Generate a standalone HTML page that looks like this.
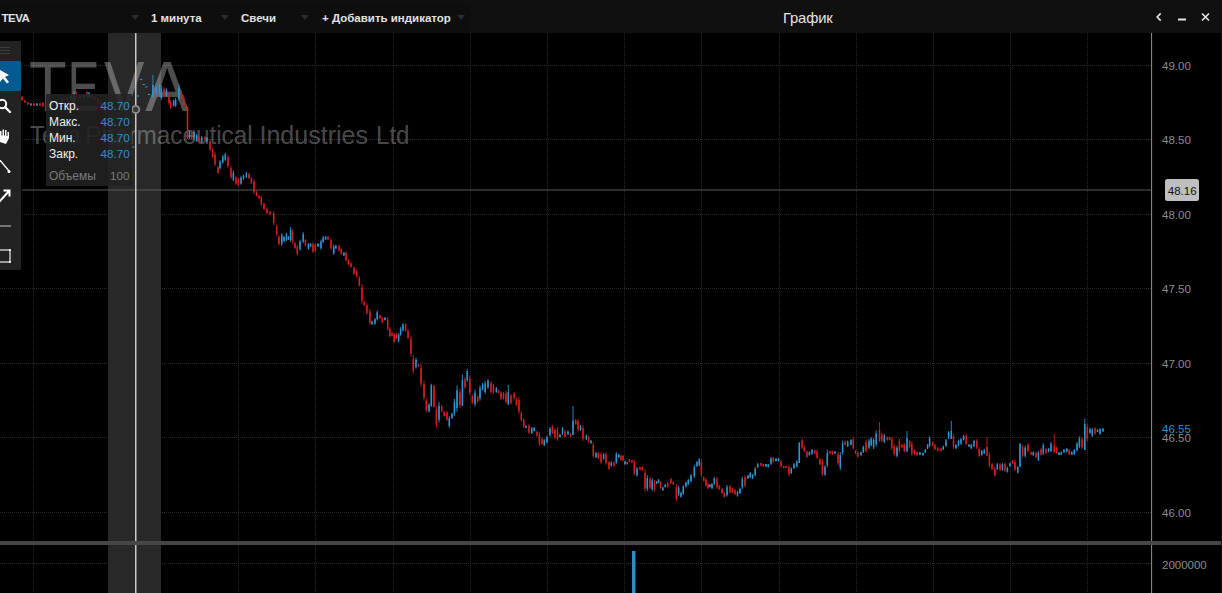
<!DOCTYPE html>
<html lang="ru"><head><meta charset="utf-8"><title>График</title>
<style>
html,body{margin:0;padding:0;background:#000;}
body{width:1222px;height:593px;overflow:hidden;position:relative;font-family:"Liberation Sans",sans-serif;}
#hdr{position:absolute;left:0;top:0;width:1222px;height:33px;background:#101010;}
#hdr .tb{position:absolute;top:3px;left:0;width:470px;height:28px;background:#0e0e0e;border-radius:3px;}
#hdr span{position:absolute;color:#f2f2f2;font-size:11.5px;font-weight:bold;top:11px;line-height:14px;color:#e2e2e2;white-space:nowrap;}
#hdr .title{font-size:14.8px;font-weight:normal;top:8.6px;line-height:18px;color:#e4e4e4;letter-spacing:-0.15px;}
.dd{position:absolute;top:14.5px;width:0;height:0;border-left:4px solid transparent;border-right:4px solid transparent;border-top:5px solid #2c2c2c;}
svg{position:absolute;left:0;top:0;}
.g{stroke:#292929;stroke-width:1;stroke-dasharray:1 1;}
.ax{fill:#8c8c8c;font-size:11.5px;font-family:"Liberation Sans",sans-serif;}
#tip{position:absolute;left:46px;top:94px;width:86px;height:91.5px;background:rgba(34,34,34,0.88);}
#tip div{position:absolute;left:3px;font-size:12px;line-height:14px;color:#f0f0f0;white-space:nowrap;}
#tip div b{position:absolute;left:51.5px;font-weight:normal;color:#2b8fd0;font-size:11.7px;}
#tool{position:absolute;left:0;top:41px;width:21px;height:229px;background:#222;}
#tool .sel{position:absolute;left:0;top:20px;width:21px;height:30px;background:#065a92;}
</style></head><body>
<svg width="1222" height="593" viewBox="0 0 1222 593">
<rect x="0" y="0" width="1222" height="593" fill="#000"/>
<rect x="108" y="33" width="53" height="560" fill="#282828"/>
<line x1="33.5" y1="33" x2="33.5" y2="593" class="g"/>
<line x1="117.5" y1="33" x2="117.5" y2="593" class="g"/>
<line x1="238.5" y1="33" x2="238.5" y2="593" class="g"/>
<line x1="315.5" y1="33" x2="315.5" y2="593" class="g"/>
<line x1="393.5" y1="33" x2="393.5" y2="593" class="g"/>
<line x1="470.5" y1="33" x2="470.5" y2="593" class="g"/>
<line x1="547.5" y1="33" x2="547.5" y2="593" class="g"/>
<line x1="624.5" y1="33" x2="624.5" y2="593" class="g"/>
<line x1="701.5" y1="33" x2="701.5" y2="593" class="g"/>
<line x1="779.5" y1="33" x2="779.5" y2="593" class="g"/>
<line x1="856.5" y1="33" x2="856.5" y2="593" class="g"/>
<line x1="933.5" y1="33" x2="933.5" y2="593" class="g"/>
<line x1="1010.5" y1="33" x2="1010.5" y2="593" class="g"/>
<line x1="1087.5" y1="33" x2="1087.5" y2="593" class="g"/>
<line x1="0" y1="65.5" x2="1151" y2="65.5" class="g"/>
<line x1="0" y1="139.5" x2="1151" y2="139.5" class="g"/>
<line x1="0" y1="214.5" x2="1151" y2="214.5" class="g"/>
<line x1="0" y1="288.5" x2="1151" y2="288.5" class="g"/>
<line x1="0" y1="363.5" x2="1151" y2="363.5" class="g"/>
<line x1="0" y1="437.5" x2="1151" y2="437.5" class="g"/>
<line x1="0" y1="512.5" x2="1151" y2="512.5" class="g"/>
<line x1="0" y1="563.5" x2="1151" y2="563.5" class="g"/>
<g fill="#fff" fill-opacity="0.3" font-family="Liberation Sans, sans-serif">
<text transform="translate(28.94,110.8) scale(0.868,1)" font-size="71">T</text>
<text transform="translate(67.81,110.8) scale(0.665,1)" font-size="71">E</text>
<text transform="translate(104.00,110.8) scale(0.852,1)" font-size="71">V</text>
<text transform="translate(145.30,110.8) scale(0.923,1)" font-size="71">A</text>
<text x="30" y="143.5" font-size="25" textLength="51" lengthAdjust="spacingAndGlyphs">Teva</text>
<text x="85.2" y="143.5" font-size="25" textLength="167.5" lengthAdjust="spacingAndGlyphs">Pharmaceutical</text>
<text x="259.5" y="143.5" font-size="25" textLength="108.5" lengthAdjust="spacingAndGlyphs">Industries</text>
<text x="376" y="143.5" font-size="25" textLength="33.5" lengthAdjust="spacingAndGlyphs">Ltd</text>
</g>
<rect x="22" y="189.5" width="1129" height="1" fill="#5a5a5a"/>
<rect x="135" y="33" width="1.5" height="560" fill="#c8c8c8"/>
<rect x="21.5" y="96.0" width="1" height="5.0" fill="#b01c1c"/>
<rect x="21.25" y="96.9" width="1.5" height="3.4" fill="#dd1c1c"/>
<rect x="24.5" y="100.0" width="1" height="3.0" fill="#b01c1c"/>
<rect x="24.25" y="100.5" width="1.5" height="2.0" fill="#dd1c1c"/>
<rect x="27.5" y="102.0" width="1" height="3.0" fill="#b01c1c"/>
<rect x="27.25" y="102.5" width="1.5" height="2.0" fill="#dd1c1c"/>
<rect x="30.5" y="103.0" width="1" height="3.0" fill="#2683b8"/>
<rect x="30.25" y="103.5" width="1.5" height="2.0" fill="#2a98d6"/>
<rect x="33.5" y="103.0" width="1" height="3.0" fill="#b01c1c"/>
<rect x="33.25" y="103.5" width="1.5" height="2.0" fill="#dd1c1c"/>
<rect x="36.5" y="103.0" width="1" height="3.0" fill="#2683b8"/>
<rect x="36.25" y="103.5" width="1.5" height="2.0" fill="#2a98d6"/>
<rect x="39.5" y="103.0" width="1" height="3.0" fill="#b01c1c"/>
<rect x="39.25" y="103.5" width="1.5" height="2.0" fill="#dd1c1c"/>
<rect x="42.5" y="102.0" width="1" height="5.0" fill="#b01c1c"/>
<rect x="42.25" y="102.9" width="1.5" height="3.4" fill="#dd1c1c"/>
<rect x="46.5" y="104.0" width="1" height="3.0" fill="#b01c1c"/>
<rect x="46.25" y="104.5" width="1.5" height="2.0" fill="#dd1c1c"/>
<rect x="51.5" y="103.0" width="1" height="3.0" fill="#2683b8"/>
<rect x="51.25" y="103.5" width="1.5" height="2.0" fill="#2a98d6"/>
<rect x="56.5" y="101.0" width="1" height="4.0" fill="#2683b8"/>
<rect x="56.25" y="101.7" width="1.5" height="2.7" fill="#2a98d6"/>
<rect x="61.5" y="98.0" width="1" height="4.0" fill="#2683b8"/>
<rect x="61.25" y="98.7" width="1.5" height="2.7" fill="#2a98d6"/>
<rect x="66.5" y="97.0" width="1" height="4.0" fill="#b01c1c"/>
<rect x="66.25" y="97.7" width="1.5" height="2.7" fill="#dd1c1c"/>
<rect x="70.5" y="95.0" width="1" height="5.0" fill="#2683b8"/>
<rect x="70.25" y="95.9" width="1.5" height="3.4" fill="#2a98d6"/>
<rect x="73.5" y="91.0" width="1" height="8.0" fill="#2683b8"/>
<rect x="73.25" y="92.4" width="1.5" height="5.4" fill="#2a98d6"/>
<rect x="75.5" y="91.0" width="1" height="7.0" fill="#b01c1c"/>
<rect x="75.25" y="92.3" width="1.5" height="4.8" fill="#dd1c1c"/>
<rect x="79.5" y="95.0" width="1" height="4.0" fill="#b01c1c"/>
<rect x="79.25" y="95.7" width="1.5" height="2.7" fill="#dd1c1c"/>
<rect x="83.5" y="94.0" width="1" height="4.0" fill="#2683b8"/>
<rect x="83.25" y="94.7" width="1.5" height="2.7" fill="#2a98d6"/>
<rect x="86.5" y="91.0" width="1" height="7.0" fill="#b01c1c"/>
<rect x="86.25" y="92.3" width="1.5" height="4.8" fill="#dd1c1c"/>
<rect x="88.5" y="92.0" width="1" height="6.0" fill="#2683b8"/>
<rect x="88.25" y="93.1" width="1.5" height="4.1" fill="#2a98d6"/>
<rect x="91.5" y="94.0" width="1" height="5.0" fill="#b01c1c"/>
<rect x="91.25" y="94.9" width="1.5" height="3.4" fill="#dd1c1c"/>
<rect x="94.5" y="96.0" width="1" height="4.0" fill="#b01c1c"/>
<rect x="94.25" y="96.7" width="1.5" height="2.7" fill="#dd1c1c"/>
<rect x="97.5" y="98.0" width="1" height="6.0" fill="#b01c1c"/>
<rect x="97.25" y="99.1" width="1.5" height="4.1" fill="#dd1c1c"/>
<rect x="100.5" y="100.0" width="1" height="10.0" fill="#b01c1c"/>
<rect x="100.25" y="101.8" width="1.5" height="6.8" fill="#dd1c1c"/>
<rect x="103.5" y="106.0" width="1" height="6.0" fill="#b01c1c"/>
<rect x="103.25" y="107.1" width="1.5" height="4.1" fill="#dd1c1c"/>
<rect x="105.5" y="110.0" width="1" height="5.0" fill="#b01c1c"/>
<rect x="105.25" y="110.9" width="1.5" height="3.4" fill="#dd1c1c"/>
<rect x="152.4" y="75.0" width="1" height="23.0" fill="#2683b8"/>
<rect x="152.15" y="85.0" width="1.5" height="12.0" fill="#2a98d6"/>
<rect x="155.5" y="85.0" width="1" height="10.0" fill="#2683b8"/>
<rect x="155.25" y="86.8" width="1.5" height="6.8" fill="#2a98d6"/>
<rect x="159.1" y="82.0" width="1" height="14.0" fill="#2683b8"/>
<rect x="158.85" y="84.5" width="1.5" height="9.5" fill="#2a98d6"/>
<rect x="160.8" y="85.0" width="1" height="15.0" fill="#2683b8"/>
<rect x="160.55" y="87.7" width="1.5" height="10.2" fill="#2a98d6"/>
<rect x="163.5" y="87.0" width="1" height="10.0" fill="#b01c1c"/>
<rect x="163.25" y="88.8" width="1.5" height="6.8" fill="#dd1c1c"/>
<rect x="165.9" y="88.0" width="1" height="9.0" fill="#2683b8"/>
<rect x="165.65" y="89.6" width="1.5" height="6.1" fill="#2a98d6"/>
<rect x="168.5" y="93.0" width="1" height="11.7" fill="#b01c1c"/>
<rect x="168.25" y="95.1" width="1.5" height="8.0" fill="#dd1c1c"/>
<rect x="170.1" y="100.0" width="1" height="9.0" fill="#b01c1c"/>
<rect x="169.85" y="101.6" width="1.5" height="6.1" fill="#dd1c1c"/>
<rect x="173.1" y="99.6" width="1" height="6.8" fill="#2683b8"/>
<rect x="172.85" y="100.8" width="1.5" height="4.6" fill="#2a98d6"/>
<rect x="175.1" y="98.0" width="1" height="9.0" fill="#2683b8"/>
<rect x="174.85" y="99.6" width="1.5" height="6.1" fill="#2a98d6"/>
<rect x="178.5" y="84.5" width="1" height="16.5" fill="#2683b8"/>
<rect x="178.25" y="87.5" width="1.5" height="11.2" fill="#2a98d6"/>
<rect x="181.0" y="90.0" width="1" height="12.0" fill="#b01c1c"/>
<rect x="180.75" y="92.2" width="1.5" height="8.2" fill="#dd1c1c"/>
<rect x="183.2" y="95.0" width="1" height="12.0" fill="#b01c1c"/>
<rect x="182.95" y="97.2" width="1.5" height="8.2" fill="#dd1c1c"/>
<rect x="185.3" y="104.7" width="1" height="5.9" fill="#b01c1c"/>
<rect x="185.05" y="105.8" width="1.5" height="4.0" fill="#dd1c1c"/>
<rect x="187.0" y="107.0" width="1" height="32.0" fill="#b01c1c"/>
<rect x="186.75" y="107.0" width="1.5" height="32.0" fill="#dd1c1c"/>
<rect x="189.0" y="130.0" width="1" height="9.0" fill="#2683b8"/>
<rect x="188.75" y="131.6" width="1.5" height="6.1" fill="#2a98d6"/>
<rect x="191.2" y="132.0" width="1" height="8.0" fill="#b01c1c"/>
<rect x="190.95" y="133.4" width="1.5" height="5.4" fill="#dd1c1c"/>
<rect x="193.5" y="130.0" width="1" height="11.0" fill="#2683b8"/>
<rect x="193.25" y="132.0" width="1.5" height="7.5" fill="#2a98d6"/>
<rect x="196.2" y="134.0" width="1" height="8.0" fill="#2683b8"/>
<rect x="195.95" y="135.4" width="1.5" height="5.4" fill="#2a98d6"/>
<rect x="198.5" y="136.0" width="1" height="7.0" fill="#b01c1c"/>
<rect x="198.25" y="137.3" width="1.5" height="4.8" fill="#dd1c1c"/>
<rect x="201.2" y="136.0" width="1" height="7.0" fill="#2683b8"/>
<rect x="200.95" y="137.3" width="1.5" height="4.8" fill="#2a98d6"/>
<rect x="204.5" y="136.0" width="1" height="5.0" fill="#b01c1c"/>
<rect x="204.25" y="136.9" width="1.5" height="3.4" fill="#dd1c1c"/>
<rect x="206.5" y="137.0" width="1" height="5.0" fill="#2683b8"/>
<rect x="206.25" y="137.9" width="1.5" height="3.4" fill="#2a98d6"/>
<rect x="209.5" y="139.0" width="1" height="12.0" fill="#b01c1c"/>
<rect x="209.25" y="141.2" width="1.5" height="8.2" fill="#dd1c1c"/>
<rect x="212.1" y="147.7" width="1" height="10.1" fill="#b01c1c"/>
<rect x="211.85" y="149.5" width="1.5" height="6.9" fill="#dd1c1c"/>
<rect x="214.5" y="152.0" width="1" height="14.0" fill="#b01c1c"/>
<rect x="214.25" y="154.5" width="1.5" height="9.5" fill="#dd1c1c"/>
<rect x="217.5" y="166.0" width="1" height="8.0" fill="#b01c1c"/>
<rect x="217.25" y="167.4" width="1.5" height="5.4" fill="#dd1c1c"/>
<rect x="219.5" y="160.0" width="1" height="9.6" fill="#2683b8"/>
<rect x="219.25" y="161.7" width="1.5" height="6.5" fill="#2a98d6"/>
<rect x="222.3" y="155.0" width="1" height="8.7" fill="#2683b8"/>
<rect x="222.05" y="156.6" width="1.5" height="5.9" fill="#2a98d6"/>
<rect x="224.8" y="152.8" width="1" height="8.2" fill="#2683b8"/>
<rect x="224.55" y="154.3" width="1.5" height="5.6" fill="#2a98d6"/>
<rect x="227.5" y="155.0" width="1" height="13.0" fill="#b01c1c"/>
<rect x="227.25" y="157.3" width="1.5" height="8.8" fill="#dd1c1c"/>
<rect x="230.5" y="166.0" width="1" height="13.0" fill="#b01c1c"/>
<rect x="230.25" y="168.3" width="1.5" height="8.8" fill="#dd1c1c"/>
<rect x="232.9" y="170.5" width="1" height="10.9" fill="#2683b8"/>
<rect x="232.65" y="172.5" width="1.5" height="7.4" fill="#2a98d6"/>
<rect x="235.5" y="176.0" width="1" height="8.8" fill="#b01c1c"/>
<rect x="235.25" y="177.6" width="1.5" height="6.0" fill="#dd1c1c"/>
<rect x="237.8" y="178.0" width="1" height="8.5" fill="#b01c1c"/>
<rect x="237.55" y="179.5" width="1.5" height="5.8" fill="#dd1c1c"/>
<rect x="240.5" y="176.0" width="1" height="8.8" fill="#2683b8"/>
<rect x="240.25" y="177.6" width="1.5" height="6.0" fill="#2a98d6"/>
<rect x="243.0" y="174.7" width="1" height="5.0" fill="#2683b8"/>
<rect x="242.75" y="175.6" width="1.5" height="3.4" fill="#2a98d6"/>
<rect x="245.9" y="172.0" width="1" height="6.0" fill="#2683b8"/>
<rect x="245.65" y="173.1" width="1.5" height="4.1" fill="#2a98d6"/>
<rect x="248.5" y="173.0" width="1" height="6.0" fill="#b01c1c"/>
<rect x="248.25" y="174.1" width="1.5" height="4.1" fill="#dd1c1c"/>
<rect x="250.9" y="177.0" width="1" height="7.0" fill="#b01c1c"/>
<rect x="250.65" y="178.3" width="1.5" height="4.8" fill="#dd1c1c"/>
<rect x="253.5" y="179.0" width="1" height="15.0" fill="#b01c1c"/>
<rect x="253.25" y="181.7" width="1.5" height="10.2" fill="#dd1c1c"/>
<rect x="256.0" y="190.7" width="1" height="5.9" fill="#b01c1c"/>
<rect x="255.75" y="191.8" width="1.5" height="4.0" fill="#dd1c1c"/>
<rect x="258.5" y="195.0" width="1" height="4.0" fill="#b01c1c"/>
<rect x="258.25" y="195.7" width="1.5" height="2.7" fill="#dd1c1c"/>
<rect x="260.8" y="195.8" width="1" height="10.1" fill="#b01c1c"/>
<rect x="260.55" y="197.6" width="1.5" height="6.9" fill="#dd1c1c"/>
<rect x="263.5" y="202.5" width="1" height="7.5" fill="#b01c1c"/>
<rect x="263.25" y="203.8" width="1.5" height="5.1" fill="#dd1c1c"/>
<rect x="266.5" y="207.6" width="1" height="6.4" fill="#b01c1c"/>
<rect x="266.25" y="208.8" width="1.5" height="4.4" fill="#dd1c1c"/>
<rect x="269.5" y="211.0" width="1" height="4.0" fill="#b01c1c"/>
<rect x="269.25" y="211.7" width="1.5" height="2.7" fill="#dd1c1c"/>
<rect x="273.2" y="211.0" width="1" height="14.0" fill="#b01c1c"/>
<rect x="272.95" y="213.5" width="1.5" height="9.5" fill="#dd1c1c"/>
<rect x="276.2" y="224.5" width="1" height="11.5" fill="#b01c1c"/>
<rect x="275.95" y="226.6" width="1.5" height="7.8" fill="#dd1c1c"/>
<rect x="278.5" y="235.0" width="1" height="10.5" fill="#b01c1c"/>
<rect x="278.25" y="236.9" width="1.5" height="7.1" fill="#dd1c1c"/>
<rect x="281.3" y="233.0" width="1" height="13.0" fill="#2683b8"/>
<rect x="281.05" y="235.3" width="1.5" height="8.8" fill="#2a98d6"/>
<rect x="283.5" y="236.0" width="1" height="6.0" fill="#2683b8"/>
<rect x="283.25" y="237.1" width="1.5" height="4.1" fill="#2a98d6"/>
<rect x="286.0" y="233.0" width="1" height="8.0" fill="#2683b8"/>
<rect x="285.75" y="234.4" width="1.5" height="5.4" fill="#2a98d6"/>
<rect x="288.0" y="236.0" width="1" height="4.0" fill="#2683b8"/>
<rect x="287.75" y="236.7" width="1.5" height="2.7" fill="#2a98d6"/>
<rect x="290.1" y="227.0" width="1" height="15.0" fill="#2683b8"/>
<rect x="289.85" y="229.7" width="1.5" height="10.2" fill="#2a98d6"/>
<rect x="292.1" y="229.5" width="1" height="14.3" fill="#b01c1c"/>
<rect x="291.85" y="232.1" width="1.5" height="9.7" fill="#dd1c1c"/>
<rect x="294.5" y="242.0" width="1" height="7.0" fill="#b01c1c"/>
<rect x="294.25" y="243.3" width="1.5" height="4.8" fill="#dd1c1c"/>
<rect x="296.8" y="244.7" width="1" height="10.9" fill="#b01c1c"/>
<rect x="296.55" y="246.7" width="1.5" height="7.4" fill="#dd1c1c"/>
<rect x="299.5" y="239.6" width="1" height="11.0" fill="#2683b8"/>
<rect x="299.25" y="241.6" width="1.5" height="7.5" fill="#2a98d6"/>
<rect x="302.7" y="232.0" width="1" height="11.0" fill="#2683b8"/>
<rect x="302.45" y="234.0" width="1.5" height="7.5" fill="#2a98d6"/>
<rect x="304.9" y="238.8" width="1" height="7.6" fill="#b01c1c"/>
<rect x="304.65" y="240.2" width="1.5" height="5.2" fill="#dd1c1c"/>
<rect x="307.9" y="243.0" width="1" height="6.7" fill="#2683b8"/>
<rect x="307.65" y="244.2" width="1.5" height="4.6" fill="#2a98d6"/>
<rect x="310.1" y="243.0" width="1" height="4.0" fill="#2683b8"/>
<rect x="309.85" y="243.7" width="1.5" height="2.7" fill="#2a98d6"/>
<rect x="312.5" y="242.0" width="1" height="11.0" fill="#b01c1c"/>
<rect x="312.25" y="244.0" width="1.5" height="7.5" fill="#dd1c1c"/>
<rect x="314.8" y="243.0" width="1" height="9.0" fill="#b01c1c"/>
<rect x="314.55" y="244.6" width="1.5" height="6.1" fill="#dd1c1c"/>
<rect x="317.5" y="243.0" width="1" height="4.0" fill="#2683b8"/>
<rect x="317.25" y="243.7" width="1.5" height="2.7" fill="#2a98d6"/>
<rect x="320.5" y="239.6" width="1" height="10.1" fill="#2683b8"/>
<rect x="320.25" y="241.4" width="1.5" height="6.9" fill="#2a98d6"/>
<rect x="322.7" y="236.0" width="1" height="7.0" fill="#2683b8"/>
<rect x="322.45" y="237.3" width="1.5" height="4.8" fill="#2a98d6"/>
<rect x="325.1" y="236.0" width="1" height="4.0" fill="#2683b8"/>
<rect x="324.85" y="236.7" width="1.5" height="2.7" fill="#2a98d6"/>
<rect x="327.5" y="236.0" width="1" height="4.0" fill="#b01c1c"/>
<rect x="327.25" y="236.7" width="1.5" height="2.7" fill="#dd1c1c"/>
<rect x="330.5" y="238.0" width="1" height="11.7" fill="#b01c1c"/>
<rect x="330.25" y="240.1" width="1.5" height="8.0" fill="#dd1c1c"/>
<rect x="333.2" y="244.7" width="1" height="10.1" fill="#2683b8"/>
<rect x="332.95" y="246.5" width="1.5" height="6.9" fill="#2a98d6"/>
<rect x="335.4" y="245.0" width="1" height="4.0" fill="#2683b8"/>
<rect x="335.15" y="245.7" width="1.5" height="2.7" fill="#2a98d6"/>
<rect x="338.5" y="244.7" width="1" height="6.7" fill="#b01c1c"/>
<rect x="338.25" y="245.9" width="1.5" height="4.6" fill="#dd1c1c"/>
<rect x="340.7" y="248.0" width="1" height="6.8" fill="#b01c1c"/>
<rect x="340.45" y="249.2" width="1.5" height="4.6" fill="#dd1c1c"/>
<rect x="343.4" y="252.0" width="1" height="4.0" fill="#2683b8"/>
<rect x="343.15" y="252.7" width="1.5" height="2.7" fill="#2a98d6"/>
<rect x="345.5" y="251.4" width="1" height="10.1" fill="#b01c1c"/>
<rect x="345.25" y="253.2" width="1.5" height="6.9" fill="#dd1c1c"/>
<rect x="347.9" y="259.0" width="1" height="6.0" fill="#b01c1c"/>
<rect x="347.65" y="260.1" width="1.5" height="4.1" fill="#dd1c1c"/>
<rect x="350.5" y="262.4" width="1" height="5.1" fill="#b01c1c"/>
<rect x="350.25" y="263.3" width="1.5" height="3.5" fill="#dd1c1c"/>
<rect x="353.5" y="266.6" width="1" height="8.4" fill="#b01c1c"/>
<rect x="353.25" y="268.1" width="1.5" height="5.7" fill="#dd1c1c"/>
<rect x="356.2" y="270.0" width="1" height="7.6" fill="#b01c1c"/>
<rect x="355.95" y="271.4" width="1.5" height="5.2" fill="#dd1c1c"/>
<rect x="358.8" y="276.0" width="1" height="10.5" fill="#b01c1c"/>
<rect x="358.55" y="277.9" width="1.5" height="7.1" fill="#dd1c1c"/>
<rect x="361.5" y="284.0" width="1" height="19.7" fill="#b01c1c"/>
<rect x="361.25" y="287.5" width="1.5" height="13.4" fill="#dd1c1c"/>
<rect x="363.8" y="301.0" width="1" height="5.0" fill="#b01c1c"/>
<rect x="363.55" y="301.9" width="1.5" height="3.4" fill="#dd1c1c"/>
<rect x="366.4" y="303.0" width="1" height="11.7" fill="#b01c1c"/>
<rect x="366.15" y="305.1" width="1.5" height="8.0" fill="#dd1c1c"/>
<rect x="369.4" y="308.8" width="1" height="16.0" fill="#b01c1c"/>
<rect x="369.15" y="311.7" width="1.5" height="10.9" fill="#dd1c1c"/>
<rect x="371.5" y="320.6" width="1" height="4.2" fill="#2683b8"/>
<rect x="371.25" y="321.4" width="1.5" height="2.9" fill="#2a98d6"/>
<rect x="374.5" y="318.0" width="1" height="6.8" fill="#2683b8"/>
<rect x="374.25" y="319.2" width="1.5" height="4.6" fill="#2a98d6"/>
<rect x="376.7" y="310.5" width="1" height="10.1" fill="#2683b8"/>
<rect x="376.45" y="312.3" width="1.5" height="6.9" fill="#2a98d6"/>
<rect x="379.5" y="314.7" width="1" height="4.3" fill="#b01c1c"/>
<rect x="379.25" y="315.5" width="1.5" height="2.9" fill="#dd1c1c"/>
<rect x="381.8" y="317.0" width="1" height="6.0" fill="#b01c1c"/>
<rect x="381.55" y="318.1" width="1.5" height="4.1" fill="#dd1c1c"/>
<rect x="384.5" y="317.0" width="1" height="3.6" fill="#2683b8"/>
<rect x="384.25" y="317.6" width="1.5" height="2.4" fill="#2a98d6"/>
<rect x="387.2" y="317.0" width="1" height="13.7" fill="#b01c1c"/>
<rect x="386.95" y="319.5" width="1.5" height="9.3" fill="#dd1c1c"/>
<rect x="389.3" y="327.0" width="1" height="10.5" fill="#b01c1c"/>
<rect x="389.05" y="328.9" width="1.5" height="7.1" fill="#dd1c1c"/>
<rect x="391.5" y="332.0" width="1" height="4.6" fill="#b01c1c"/>
<rect x="391.25" y="332.8" width="1.5" height="3.1" fill="#dd1c1c"/>
<rect x="393.7" y="333.0" width="1" height="10.0" fill="#b01c1c"/>
<rect x="393.45" y="334.8" width="1.5" height="6.8" fill="#dd1c1c"/>
<rect x="395.8" y="333.0" width="1" height="6.0" fill="#b01c1c"/>
<rect x="395.55" y="334.1" width="1.5" height="4.1" fill="#dd1c1c"/>
<rect x="398.1" y="333.0" width="1" height="9.5" fill="#2683b8"/>
<rect x="397.85" y="334.7" width="1.5" height="6.5" fill="#2a98d6"/>
<rect x="400.1" y="327.0" width="1" height="8.8" fill="#2683b8"/>
<rect x="399.85" y="328.6" width="1.5" height="6.0" fill="#2a98d6"/>
<rect x="402.5" y="323.0" width="1" height="8.5" fill="#2683b8"/>
<rect x="402.25" y="324.5" width="1.5" height="5.8" fill="#2a98d6"/>
<rect x="405.1" y="323.0" width="1" height="9.0" fill="#b01c1c"/>
<rect x="404.85" y="324.6" width="1.5" height="6.1" fill="#dd1c1c"/>
<rect x="407.5" y="329.0" width="1" height="10.0" fill="#b01c1c"/>
<rect x="407.25" y="330.8" width="1.5" height="6.8" fill="#dd1c1c"/>
<rect x="410.5" y="335.8" width="1" height="21.0" fill="#b01c1c"/>
<rect x="410.25" y="339.6" width="1.5" height="14.3" fill="#dd1c1c"/>
<rect x="412.8" y="355.0" width="1" height="18.7" fill="#b01c1c"/>
<rect x="412.55" y="358.4" width="1.5" height="12.7" fill="#dd1c1c"/>
<rect x="415.5" y="357.7" width="1" height="11.0" fill="#2683b8"/>
<rect x="415.25" y="359.7" width="1.5" height="7.5" fill="#2a98d6"/>
<rect x="418.0" y="364.0" width="1" height="3.0" fill="#b01c1c"/>
<rect x="417.75" y="364.5" width="1.5" height="2.0" fill="#dd1c1c"/>
<rect x="420.5" y="363.6" width="1" height="23.4" fill="#b01c1c"/>
<rect x="420.25" y="367.8" width="1.5" height="15.9" fill="#dd1c1c"/>
<rect x="423.5" y="380.5" width="1" height="20.2" fill="#b01c1c"/>
<rect x="423.25" y="384.1" width="1.5" height="13.7" fill="#dd1c1c"/>
<rect x="425.8" y="398.0" width="1" height="14.5" fill="#b01c1c"/>
<rect x="425.55" y="400.6" width="1.5" height="9.9" fill="#dd1c1c"/>
<rect x="428.5" y="403.0" width="1" height="9.5" fill="#2683b8"/>
<rect x="428.25" y="404.7" width="1.5" height="6.5" fill="#2a98d6"/>
<rect x="430.8" y="383.8" width="1" height="22.8" fill="#2683b8"/>
<rect x="430.55" y="385.0" width="1.5" height="21.0" fill="#2a98d6"/>
<rect x="433.5" y="384.7" width="1" height="22.8" fill="#b01c1c"/>
<rect x="433.25" y="386.0" width="1.5" height="21.0" fill="#dd1c1c"/>
<rect x="435.9" y="405.8" width="1" height="21.9" fill="#b01c1c"/>
<rect x="435.65" y="409.7" width="1.5" height="14.9" fill="#dd1c1c"/>
<rect x="438.5" y="402.0" width="1" height="20.6" fill="#2683b8"/>
<rect x="438.25" y="405.7" width="1.5" height="14.0" fill="#2a98d6"/>
<rect x="441.2" y="405.0" width="1" height="7.5" fill="#b01c1c"/>
<rect x="440.95" y="406.4" width="1.5" height="5.1" fill="#dd1c1c"/>
<rect x="443.7" y="410.8" width="1" height="5.9" fill="#b01c1c"/>
<rect x="443.45" y="411.9" width="1.5" height="4.0" fill="#dd1c1c"/>
<rect x="446.5" y="410.8" width="1" height="10.2" fill="#b01c1c"/>
<rect x="446.25" y="412.6" width="1.5" height="6.9" fill="#dd1c1c"/>
<rect x="448.8" y="416.0" width="1" height="11.7" fill="#2683b8"/>
<rect x="448.55" y="418.1" width="1.5" height="8.0" fill="#2a98d6"/>
<rect x="451.5" y="412.5" width="1" height="6.5" fill="#2683b8"/>
<rect x="451.25" y="413.7" width="1.5" height="4.4" fill="#2a98d6"/>
<rect x="453.9" y="399.0" width="1" height="17.0" fill="#2683b8"/>
<rect x="453.65" y="402.1" width="1.5" height="11.6" fill="#2a98d6"/>
<rect x="456.5" y="385.5" width="1" height="26.2" fill="#2683b8"/>
<rect x="456.25" y="390.2" width="1.5" height="17.8" fill="#2a98d6"/>
<rect x="459.5" y="389.0" width="1" height="19.0" fill="#b01c1c"/>
<rect x="459.25" y="392.4" width="1.5" height="12.9" fill="#dd1c1c"/>
<rect x="461.9" y="374.6" width="1" height="31.2" fill="#2683b8"/>
<rect x="461.65" y="380.0" width="1.5" height="25.8" fill="#2a98d6"/>
<rect x="464.5" y="377.0" width="1" height="12.0" fill="#b01c1c"/>
<rect x="464.25" y="379.2" width="1.5" height="8.2" fill="#dd1c1c"/>
<rect x="466.7" y="368.7" width="1" height="13.3" fill="#2683b8"/>
<rect x="466.45" y="371.1" width="1.5" height="9.0" fill="#2a98d6"/>
<rect x="469.3" y="375.4" width="1" height="20.2" fill="#b01c1c"/>
<rect x="469.05" y="379.0" width="1.5" height="13.7" fill="#dd1c1c"/>
<rect x="471.8" y="394.0" width="1" height="10.0" fill="#b01c1c"/>
<rect x="471.55" y="395.8" width="1.5" height="6.8" fill="#dd1c1c"/>
<rect x="474.5" y="389.7" width="1" height="16.9" fill="#2683b8"/>
<rect x="474.25" y="392.7" width="1.5" height="11.5" fill="#2a98d6"/>
<rect x="477.2" y="395.6" width="1" height="6.8" fill="#b01c1c"/>
<rect x="476.95" y="396.8" width="1.5" height="4.6" fill="#dd1c1c"/>
<rect x="479.5" y="385.5" width="1" height="15.2" fill="#2683b8"/>
<rect x="479.25" y="388.2" width="1.5" height="10.3" fill="#2a98d6"/>
<rect x="482.1" y="383.0" width="1" height="7.6" fill="#2683b8"/>
<rect x="481.85" y="384.4" width="1.5" height="5.2" fill="#2a98d6"/>
<rect x="484.7" y="381.0" width="1" height="13.0" fill="#2683b8"/>
<rect x="484.45" y="383.3" width="1.5" height="8.8" fill="#2a98d6"/>
<rect x="487.5" y="378.8" width="1" height="10.2" fill="#2683b8"/>
<rect x="487.25" y="380.6" width="1.5" height="6.9" fill="#2a98d6"/>
<rect x="490.5" y="381.0" width="1" height="12.6" fill="#b01c1c"/>
<rect x="490.25" y="383.3" width="1.5" height="8.6" fill="#dd1c1c"/>
<rect x="493.0" y="384.0" width="1" height="9.6" fill="#b01c1c"/>
<rect x="492.75" y="385.7" width="1.5" height="6.5" fill="#dd1c1c"/>
<rect x="495.9" y="387.0" width="1" height="5.8" fill="#2683b8"/>
<rect x="495.65" y="388.0" width="1.5" height="3.9" fill="#2a98d6"/>
<rect x="498.1" y="390.0" width="1" height="3.6" fill="#b01c1c"/>
<rect x="497.85" y="390.6" width="1.5" height="2.4" fill="#dd1c1c"/>
<rect x="500.5" y="391.0" width="1" height="9.0" fill="#b01c1c"/>
<rect x="500.25" y="392.6" width="1.5" height="6.1" fill="#dd1c1c"/>
<rect x="503.0" y="392.0" width="1" height="7.5" fill="#b01c1c"/>
<rect x="502.75" y="393.4" width="1.5" height="5.1" fill="#dd1c1c"/>
<rect x="505.5" y="391.0" width="1" height="12.7" fill="#b01c1c"/>
<rect x="505.25" y="393.3" width="1.5" height="8.6" fill="#dd1c1c"/>
<rect x="507.8" y="385.0" width="1" height="19.6" fill="#2683b8"/>
<rect x="507.55" y="392.0" width="1.5" height="12.6" fill="#2a98d6"/>
<rect x="510.5" y="393.6" width="1" height="11.0" fill="#b01c1c"/>
<rect x="510.25" y="395.6" width="1.5" height="7.5" fill="#dd1c1c"/>
<rect x="513.7" y="392.0" width="1" height="7.5" fill="#b01c1c"/>
<rect x="513.45" y="393.4" width="1.5" height="5.1" fill="#dd1c1c"/>
<rect x="515.9" y="397.8" width="1" height="8.2" fill="#b01c1c"/>
<rect x="515.65" y="399.3" width="1.5" height="5.6" fill="#dd1c1c"/>
<rect x="518.5" y="397.0" width="1" height="16.8" fill="#b01c1c"/>
<rect x="518.25" y="400.0" width="1.5" height="11.4" fill="#dd1c1c"/>
<rect x="520.8" y="411.0" width="1" height="10.4" fill="#b01c1c"/>
<rect x="520.55" y="412.9" width="1.5" height="7.1" fill="#dd1c1c"/>
<rect x="523.2" y="418.0" width="1" height="10.0" fill="#b01c1c"/>
<rect x="522.95" y="419.8" width="1.5" height="6.8" fill="#dd1c1c"/>
<rect x="525.5" y="425.6" width="1" height="2.4" fill="#2683b8"/>
<rect x="525.25" y="425.6" width="1.5" height="2.4" fill="#2a98d6"/>
<rect x="528.5" y="424.0" width="1" height="10.0" fill="#b01c1c"/>
<rect x="528.25" y="425.8" width="1.5" height="6.8" fill="#dd1c1c"/>
<rect x="531.3" y="427.0" width="1" height="7.0" fill="#2683b8"/>
<rect x="531.05" y="428.3" width="1.5" height="4.8" fill="#2a98d6"/>
<rect x="533.7" y="427.0" width="1" height="4.5" fill="#2683b8"/>
<rect x="533.45" y="427.8" width="1.5" height="3.1" fill="#2a98d6"/>
<rect x="536.5" y="430.7" width="1" height="5.9" fill="#b01c1c"/>
<rect x="536.25" y="431.8" width="1.5" height="4.0" fill="#dd1c1c"/>
<rect x="538.9" y="432.0" width="1" height="14.0" fill="#b01c1c"/>
<rect x="538.65" y="434.5" width="1.5" height="9.5" fill="#dd1c1c"/>
<rect x="541.5" y="437.5" width="1" height="7.5" fill="#b01c1c"/>
<rect x="541.25" y="438.9" width="1.5" height="5.1" fill="#dd1c1c"/>
<rect x="543.8" y="439.0" width="1" height="7.0" fill="#2683b8"/>
<rect x="543.55" y="440.3" width="1.5" height="4.8" fill="#2a98d6"/>
<rect x="546.5" y="435.8" width="1" height="7.6" fill="#2683b8"/>
<rect x="546.25" y="437.2" width="1.5" height="5.2" fill="#2a98d6"/>
<rect x="549.5" y="427.0" width="1" height="9.6" fill="#2683b8"/>
<rect x="549.25" y="428.7" width="1.5" height="6.5" fill="#2a98d6"/>
<rect x="551.9" y="424.8" width="1" height="9.2" fill="#b01c1c"/>
<rect x="551.65" y="426.5" width="1.5" height="6.3" fill="#dd1c1c"/>
<rect x="554.5" y="428.0" width="1" height="11.0" fill="#b01c1c"/>
<rect x="554.25" y="430.0" width="1.5" height="7.5" fill="#dd1c1c"/>
<rect x="557.0" y="427.0" width="1" height="13.8" fill="#b01c1c"/>
<rect x="556.75" y="429.5" width="1.5" height="9.4" fill="#dd1c1c"/>
<rect x="559.5" y="434.0" width="1" height="3.5" fill="#2683b8"/>
<rect x="559.25" y="434.6" width="1.5" height="2.4" fill="#2a98d6"/>
<rect x="562.0" y="427.0" width="1" height="8.0" fill="#2683b8"/>
<rect x="561.75" y="428.4" width="1.5" height="5.4" fill="#2a98d6"/>
<rect x="564.5" y="430.0" width="1" height="7.5" fill="#b01c1c"/>
<rect x="564.25" y="431.4" width="1.5" height="5.1" fill="#dd1c1c"/>
<rect x="567.5" y="430.7" width="1" height="4.3" fill="#2683b8"/>
<rect x="567.25" y="431.5" width="1.5" height="2.9" fill="#2a98d6"/>
<rect x="570.1" y="433.0" width="1" height="4.5" fill="#b01c1c"/>
<rect x="569.85" y="433.8" width="1.5" height="3.1" fill="#dd1c1c"/>
<rect x="572.5" y="406.0" width="1" height="29.0" fill="#2683b8"/>
<rect x="572.25" y="420.6" width="1.5" height="14.4" fill="#2a98d6"/>
<rect x="575.2" y="419.0" width="1" height="5.8" fill="#b01c1c"/>
<rect x="574.95" y="420.0" width="1.5" height="3.9" fill="#dd1c1c"/>
<rect x="577.5" y="419.0" width="1" height="12.5" fill="#b01c1c"/>
<rect x="577.25" y="421.2" width="1.5" height="8.5" fill="#dd1c1c"/>
<rect x="580.0" y="425.0" width="1" height="6.0" fill="#2683b8"/>
<rect x="579.75" y="426.1" width="1.5" height="4.1" fill="#2a98d6"/>
<rect x="582.5" y="425.0" width="1" height="16.0" fill="#b01c1c"/>
<rect x="582.25" y="427.9" width="1.5" height="10.9" fill="#dd1c1c"/>
<rect x="585.9" y="434.5" width="1" height="5.5" fill="#2683b8"/>
<rect x="585.65" y="435.5" width="1.5" height="3.7" fill="#2a98d6"/>
<rect x="588.1" y="436.0" width="1" height="7.0" fill="#b01c1c"/>
<rect x="587.85" y="437.3" width="1.5" height="4.8" fill="#dd1c1c"/>
<rect x="590.5" y="440.0" width="1" height="3.7" fill="#2683b8"/>
<rect x="590.25" y="440.7" width="1.5" height="2.5" fill="#2a98d6"/>
<rect x="592.8" y="442.0" width="1" height="16.0" fill="#b01c1c"/>
<rect x="592.55" y="444.9" width="1.5" height="10.9" fill="#dd1c1c"/>
<rect x="595.5" y="452.0" width="1" height="6.0" fill="#2683b8"/>
<rect x="595.25" y="453.1" width="1.5" height="4.1" fill="#2a98d6"/>
<rect x="597.8" y="452.0" width="1" height="7.0" fill="#b01c1c"/>
<rect x="597.55" y="453.3" width="1.5" height="4.8" fill="#dd1c1c"/>
<rect x="600.5" y="452.0" width="1" height="12.0" fill="#b01c1c"/>
<rect x="600.25" y="454.2" width="1.5" height="8.2" fill="#dd1c1c"/>
<rect x="603.1" y="453.0" width="1" height="6.7" fill="#2683b8"/>
<rect x="602.85" y="454.2" width="1.5" height="4.6" fill="#2a98d6"/>
<rect x="605.5" y="452.0" width="1" height="12.8" fill="#b01c1c"/>
<rect x="605.25" y="454.3" width="1.5" height="8.7" fill="#dd1c1c"/>
<rect x="608.5" y="460.6" width="1" height="9.3" fill="#b01c1c"/>
<rect x="608.25" y="462.3" width="1.5" height="6.3" fill="#dd1c1c"/>
<rect x="610.8" y="461.4" width="1" height="5.1" fill="#2683b8"/>
<rect x="610.55" y="462.3" width="1.5" height="3.5" fill="#2a98d6"/>
<rect x="613.5" y="461.4" width="1" height="5.1" fill="#b01c1c"/>
<rect x="613.25" y="462.3" width="1.5" height="3.5" fill="#dd1c1c"/>
<rect x="615.8" y="452.0" width="1" height="12.0" fill="#2683b8"/>
<rect x="615.55" y="454.2" width="1.5" height="8.2" fill="#2a98d6"/>
<rect x="618.3" y="453.8" width="1" height="4.2" fill="#2683b8"/>
<rect x="618.05" y="454.6" width="1.5" height="2.9" fill="#2a98d6"/>
<rect x="620.5" y="454.7" width="1" height="5.9" fill="#b01c1c"/>
<rect x="620.25" y="455.8" width="1.5" height="4.0" fill="#dd1c1c"/>
<rect x="622.5" y="454.7" width="1" height="6.7" fill="#b01c1c"/>
<rect x="622.25" y="455.9" width="1.5" height="4.6" fill="#dd1c1c"/>
<rect x="624.5" y="460.6" width="1" height="4.2" fill="#2683b8"/>
<rect x="624.25" y="461.4" width="1.5" height="2.9" fill="#2a98d6"/>
<rect x="626.7" y="461.4" width="1" height="3.4" fill="#b01c1c"/>
<rect x="626.45" y="462.0" width="1.5" height="2.3" fill="#dd1c1c"/>
<rect x="628.9" y="459.0" width="1" height="3.0" fill="#b01c1c"/>
<rect x="628.65" y="459.5" width="1.5" height="2.0" fill="#dd1c1c"/>
<rect x="631.5" y="459.7" width="1" height="3.3" fill="#b01c1c"/>
<rect x="631.25" y="460.3" width="1.5" height="2.2" fill="#dd1c1c"/>
<rect x="633.8" y="459.7" width="1" height="16.1" fill="#b01c1c"/>
<rect x="633.55" y="462.6" width="1.5" height="10.9" fill="#dd1c1c"/>
<rect x="636.5" y="467.0" width="1" height="9.6" fill="#2683b8"/>
<rect x="636.25" y="468.7" width="1.5" height="6.5" fill="#2a98d6"/>
<rect x="639.5" y="466.5" width="1" height="3.5" fill="#b01c1c"/>
<rect x="639.25" y="467.1" width="1.5" height="2.4" fill="#dd1c1c"/>
<rect x="641.7" y="466.5" width="1" height="4.2" fill="#b01c1c"/>
<rect x="641.45" y="467.3" width="1.5" height="2.9" fill="#dd1c1c"/>
<rect x="644.5" y="469.0" width="1" height="22.8" fill="#b01c1c"/>
<rect x="644.25" y="473.1" width="1.5" height="15.5" fill="#dd1c1c"/>
<rect x="646.8" y="475.0" width="1" height="16.0" fill="#2683b8"/>
<rect x="646.55" y="477.9" width="1.5" height="10.9" fill="#2a98d6"/>
<rect x="649.5" y="476.6" width="1" height="12.4" fill="#b01c1c"/>
<rect x="649.25" y="478.8" width="1.5" height="8.4" fill="#dd1c1c"/>
<rect x="651.7" y="478.0" width="1" height="13.0" fill="#2683b8"/>
<rect x="651.45" y="480.3" width="1.5" height="8.8" fill="#2a98d6"/>
<rect x="654.0" y="480.0" width="1" height="11.8" fill="#b01c1c"/>
<rect x="653.75" y="482.1" width="1.5" height="8.0" fill="#dd1c1c"/>
<rect x="656.2" y="481.0" width="1" height="3.0" fill="#2683b8"/>
<rect x="655.95" y="481.5" width="1.5" height="2.0" fill="#2a98d6"/>
<rect x="658.1" y="479.0" width="1" height="4.0" fill="#2683b8"/>
<rect x="657.85" y="479.7" width="1.5" height="2.7" fill="#2a98d6"/>
<rect x="660.0" y="481.0" width="1" height="8.0" fill="#b01c1c"/>
<rect x="659.75" y="482.4" width="1.5" height="5.4" fill="#dd1c1c"/>
<rect x="662.3" y="486.7" width="1" height="4.3" fill="#2683b8"/>
<rect x="662.05" y="487.5" width="1.5" height="2.9" fill="#2a98d6"/>
<rect x="664.7" y="484.0" width="1" height="3.6" fill="#2683b8"/>
<rect x="664.45" y="484.6" width="1.5" height="2.4" fill="#2a98d6"/>
<rect x="667.2" y="481.7" width="1" height="5.9" fill="#b01c1c"/>
<rect x="666.95" y="482.8" width="1.5" height="4.0" fill="#dd1c1c"/>
<rect x="670.5" y="478.0" width="1" height="6.0" fill="#b01c1c"/>
<rect x="670.25" y="479.1" width="1.5" height="4.1" fill="#dd1c1c"/>
<rect x="672.8" y="481.5" width="1" height="3.5" fill="#b01c1c"/>
<rect x="672.55" y="482.1" width="1.5" height="2.4" fill="#dd1c1c"/>
<rect x="675.9" y="484.0" width="1" height="17.0" fill="#b01c1c"/>
<rect x="675.65" y="487.1" width="1.5" height="11.6" fill="#dd1c1c"/>
<rect x="678.1" y="485.8" width="1" height="10.2" fill="#2683b8"/>
<rect x="677.85" y="487.6" width="1.5" height="6.9" fill="#2a98d6"/>
<rect x="680.5" y="491.7" width="1" height="5.9" fill="#2683b8"/>
<rect x="680.25" y="492.8" width="1.5" height="4.0" fill="#2a98d6"/>
<rect x="682.8" y="485.0" width="1" height="10.0" fill="#2683b8"/>
<rect x="682.55" y="486.8" width="1.5" height="6.8" fill="#2a98d6"/>
<rect x="685.5" y="481.5" width="1" height="6.0" fill="#2683b8"/>
<rect x="685.25" y="482.6" width="1.5" height="4.1" fill="#2a98d6"/>
<rect x="687.8" y="479.0" width="1" height="6.0" fill="#2683b8"/>
<rect x="687.55" y="480.1" width="1.5" height="4.1" fill="#2a98d6"/>
<rect x="690.5" y="474.0" width="1" height="8.4" fill="#2683b8"/>
<rect x="690.25" y="475.5" width="1.5" height="5.7" fill="#2a98d6"/>
<rect x="693.8" y="464.7" width="1" height="13.3" fill="#2683b8"/>
<rect x="693.55" y="467.1" width="1.5" height="9.0" fill="#2a98d6"/>
<rect x="696.5" y="461.0" width="1" height="6.0" fill="#2683b8"/>
<rect x="696.25" y="462.1" width="1.5" height="4.1" fill="#2a98d6"/>
<rect x="698.8" y="458.0" width="1" height="8.4" fill="#2683b8"/>
<rect x="698.55" y="459.5" width="1.5" height="5.7" fill="#2a98d6"/>
<rect x="700.9" y="459.6" width="1" height="17.4" fill="#b01c1c"/>
<rect x="700.65" y="462.7" width="1.5" height="11.8" fill="#dd1c1c"/>
<rect x="703.2" y="476.5" width="1" height="5.0" fill="#b01c1c"/>
<rect x="702.95" y="477.4" width="1.5" height="3.4" fill="#dd1c1c"/>
<rect x="705.5" y="478.0" width="1" height="8.6" fill="#b01c1c"/>
<rect x="705.25" y="479.5" width="1.5" height="5.8" fill="#dd1c1c"/>
<rect x="707.5" y="483.0" width="1" height="6.0" fill="#b01c1c"/>
<rect x="707.25" y="484.1" width="1.5" height="4.1" fill="#dd1c1c"/>
<rect x="709.4" y="484.0" width="1" height="3.5" fill="#2683b8"/>
<rect x="709.15" y="484.6" width="1.5" height="2.4" fill="#2a98d6"/>
<rect x="711.5" y="483.0" width="1" height="6.0" fill="#2683b8"/>
<rect x="711.25" y="484.1" width="1.5" height="4.1" fill="#2a98d6"/>
<rect x="713.8" y="477.0" width="1" height="8.0" fill="#2683b8"/>
<rect x="713.55" y="478.4" width="1.5" height="5.4" fill="#2a98d6"/>
<rect x="716.5" y="476.5" width="1" height="12.5" fill="#b01c1c"/>
<rect x="716.25" y="478.8" width="1.5" height="8.5" fill="#dd1c1c"/>
<rect x="718.8" y="485.0" width="1" height="5.0" fill="#b01c1c"/>
<rect x="718.55" y="485.9" width="1.5" height="3.4" fill="#dd1c1c"/>
<rect x="721.5" y="487.5" width="1" height="6.5" fill="#b01c1c"/>
<rect x="721.25" y="488.7" width="1.5" height="4.4" fill="#dd1c1c"/>
<rect x="723.8" y="491.7" width="1" height="5.9" fill="#b01c1c"/>
<rect x="723.55" y="492.8" width="1.5" height="4.0" fill="#dd1c1c"/>
<rect x="726.5" y="485.0" width="1" height="11.7" fill="#2683b8"/>
<rect x="726.25" y="487.1" width="1.5" height="8.0" fill="#2a98d6"/>
<rect x="729.5" y="485.0" width="1" height="8.4" fill="#b01c1c"/>
<rect x="729.25" y="486.5" width="1.5" height="5.7" fill="#dd1c1c"/>
<rect x="731.8" y="487.5" width="1" height="5.9" fill="#b01c1c"/>
<rect x="731.55" y="488.6" width="1.5" height="4.0" fill="#dd1c1c"/>
<rect x="734.5" y="489.0" width="1" height="6.0" fill="#b01c1c"/>
<rect x="734.25" y="490.1" width="1.5" height="4.1" fill="#dd1c1c"/>
<rect x="737.0" y="490.8" width="1" height="5.9" fill="#2683b8"/>
<rect x="736.75" y="491.9" width="1.5" height="4.0" fill="#2a98d6"/>
<rect x="739.5" y="487.5" width="1" height="6.5" fill="#2683b8"/>
<rect x="739.25" y="488.7" width="1.5" height="4.4" fill="#2a98d6"/>
<rect x="741.8" y="476.5" width="1" height="12.5" fill="#2683b8"/>
<rect x="741.55" y="478.8" width="1.5" height="8.5" fill="#2a98d6"/>
<rect x="744.5" y="474.8" width="1" height="12.7" fill="#b01c1c"/>
<rect x="744.25" y="477.1" width="1.5" height="8.6" fill="#dd1c1c"/>
<rect x="747.5" y="474.8" width="1" height="4.2" fill="#2683b8"/>
<rect x="747.25" y="475.6" width="1.5" height="2.9" fill="#2a98d6"/>
<rect x="749.7" y="472.0" width="1" height="6.0" fill="#2683b8"/>
<rect x="749.45" y="473.1" width="1.5" height="4.1" fill="#2a98d6"/>
<rect x="752.1" y="474.0" width="1" height="5.0" fill="#2683b8"/>
<rect x="751.85" y="474.9" width="1.5" height="3.4" fill="#2a98d6"/>
<rect x="754.7" y="467.0" width="1" height="9.5" fill="#2683b8"/>
<rect x="754.45" y="468.7" width="1.5" height="6.5" fill="#2a98d6"/>
<rect x="757.2" y="463.0" width="1" height="5.0" fill="#2683b8"/>
<rect x="756.95" y="463.9" width="1.5" height="3.4" fill="#2a98d6"/>
<rect x="760.5" y="463.0" width="1" height="2.8" fill="#b01c1c"/>
<rect x="760.25" y="463.0" width="1.5" height="2.8" fill="#dd1c1c"/>
<rect x="762.7" y="464.0" width="1" height="3.0" fill="#b01c1c"/>
<rect x="762.45" y="464.5" width="1.5" height="2.0" fill="#dd1c1c"/>
<rect x="765.5" y="464.0" width="1" height="2.6" fill="#2683b8"/>
<rect x="765.25" y="464.0" width="1.5" height="2.6" fill="#2a98d6"/>
<rect x="767.8" y="464.0" width="1" height="3.5" fill="#2683b8"/>
<rect x="767.55" y="464.6" width="1.5" height="2.4" fill="#2a98d6"/>
<rect x="770.5" y="457.0" width="1" height="8.0" fill="#2683b8"/>
<rect x="770.25" y="458.4" width="1.5" height="5.4" fill="#2a98d6"/>
<rect x="772.8" y="457.0" width="1" height="5.4" fill="#b01c1c"/>
<rect x="772.55" y="458.0" width="1.5" height="3.7" fill="#dd1c1c"/>
<rect x="775.5" y="458.0" width="1" height="3.5" fill="#2683b8"/>
<rect x="775.25" y="458.6" width="1.5" height="2.4" fill="#2a98d6"/>
<rect x="778.0" y="458.0" width="1" height="3.5" fill="#2683b8"/>
<rect x="777.75" y="458.6" width="1.5" height="2.4" fill="#2a98d6"/>
<rect x="780.5" y="460.0" width="1" height="7.5" fill="#b01c1c"/>
<rect x="780.25" y="461.4" width="1.5" height="5.1" fill="#dd1c1c"/>
<rect x="783.1" y="466.0" width="1" height="2.0" fill="#b01c1c"/>
<rect x="782.85" y="466.0" width="1.5" height="2.0" fill="#dd1c1c"/>
<rect x="785.5" y="466.0" width="1" height="2.0" fill="#b01c1c"/>
<rect x="785.25" y="466.0" width="1.5" height="2.0" fill="#dd1c1c"/>
<rect x="788.5" y="465.0" width="1" height="11.0" fill="#b01c1c"/>
<rect x="788.25" y="467.0" width="1.5" height="7.5" fill="#dd1c1c"/>
<rect x="790.8" y="467.5" width="1" height="6.5" fill="#2683b8"/>
<rect x="790.55" y="468.7" width="1.5" height="4.4" fill="#2a98d6"/>
<rect x="793.5" y="463.0" width="1" height="6.0" fill="#2683b8"/>
<rect x="793.25" y="464.1" width="1.5" height="4.1" fill="#2a98d6"/>
<rect x="796.3" y="460.0" width="1" height="7.5" fill="#2683b8"/>
<rect x="796.05" y="461.4" width="1.5" height="5.1" fill="#2a98d6"/>
<rect x="798.8" y="442.0" width="1" height="21.0" fill="#2683b8"/>
<rect x="798.55" y="443.0" width="1.5" height="20.0" fill="#2a98d6"/>
<rect x="801.5" y="438.8" width="1" height="10.2" fill="#b01c1c"/>
<rect x="801.25" y="440.6" width="1.5" height="6.9" fill="#dd1c1c"/>
<rect x="803.8" y="445.5" width="1" height="6.5" fill="#b01c1c"/>
<rect x="803.55" y="446.7" width="1.5" height="4.4" fill="#dd1c1c"/>
<rect x="806.5" y="450.6" width="1" height="7.4" fill="#b01c1c"/>
<rect x="806.25" y="451.9" width="1.5" height="5.0" fill="#dd1c1c"/>
<rect x="808.9" y="451.4" width="1" height="4.2" fill="#2683b8"/>
<rect x="808.65" y="452.2" width="1.5" height="2.9" fill="#2a98d6"/>
<rect x="811.5" y="449.0" width="1" height="5.8" fill="#2683b8"/>
<rect x="811.25" y="450.0" width="1.5" height="3.9" fill="#2a98d6"/>
<rect x="814.3" y="449.7" width="1" height="4.3" fill="#b01c1c"/>
<rect x="814.05" y="450.5" width="1.5" height="2.9" fill="#dd1c1c"/>
<rect x="816.5" y="449.7" width="1" height="9.3" fill="#b01c1c"/>
<rect x="816.25" y="451.4" width="1.5" height="6.3" fill="#dd1c1c"/>
<rect x="819.5" y="458.0" width="1" height="7.0" fill="#b01c1c"/>
<rect x="819.25" y="459.3" width="1.5" height="4.8" fill="#dd1c1c"/>
<rect x="821.9" y="459.0" width="1" height="17.0" fill="#b01c1c"/>
<rect x="821.65" y="462.1" width="1.5" height="11.6" fill="#dd1c1c"/>
<rect x="824.5" y="465.0" width="1" height="11.0" fill="#2683b8"/>
<rect x="824.25" y="467.0" width="1.5" height="7.5" fill="#2a98d6"/>
<rect x="826.8" y="449.7" width="1" height="17.8" fill="#2683b8"/>
<rect x="826.55" y="452.9" width="1.5" height="12.1" fill="#2a98d6"/>
<rect x="829.5" y="450.6" width="1" height="3.4" fill="#b01c1c"/>
<rect x="829.25" y="451.2" width="1.5" height="2.3" fill="#dd1c1c"/>
<rect x="832.0" y="450.6" width="1" height="4.2" fill="#b01c1c"/>
<rect x="831.75" y="451.4" width="1.5" height="2.9" fill="#dd1c1c"/>
<rect x="834.5" y="451.0" width="1" height="3.0" fill="#2683b8"/>
<rect x="834.25" y="451.5" width="1.5" height="2.0" fill="#2a98d6"/>
<rect x="837.5" y="452.0" width="1" height="13.0" fill="#b01c1c"/>
<rect x="837.25" y="454.3" width="1.5" height="8.8" fill="#dd1c1c"/>
<rect x="839.8" y="452.0" width="1" height="18.0" fill="#2683b8"/>
<rect x="839.55" y="455.2" width="1.5" height="12.2" fill="#2a98d6"/>
<rect x="842.1" y="440.5" width="1" height="14.3" fill="#2683b8"/>
<rect x="841.85" y="443.1" width="1.5" height="9.7" fill="#2a98d6"/>
<rect x="844.7" y="440.5" width="1" height="5.0" fill="#b01c1c"/>
<rect x="844.45" y="441.4" width="1.5" height="3.4" fill="#dd1c1c"/>
<rect x="847.2" y="440.5" width="1" height="6.5" fill="#2683b8"/>
<rect x="846.95" y="441.7" width="1.5" height="4.4" fill="#2a98d6"/>
<rect x="850.5" y="439.0" width="1" height="6.6" fill="#2683b8"/>
<rect x="850.25" y="440.2" width="1.5" height="4.5" fill="#2a98d6"/>
<rect x="852.8" y="437.0" width="1" height="13.0" fill="#b01c1c"/>
<rect x="852.55" y="439.3" width="1.5" height="8.8" fill="#dd1c1c"/>
<rect x="855.0" y="450.0" width="1" height="4.0" fill="#b01c1c"/>
<rect x="854.75" y="450.7" width="1.5" height="2.7" fill="#dd1c1c"/>
<rect x="857.3" y="451.5" width="1" height="6.0" fill="#b01c1c"/>
<rect x="857.05" y="452.6" width="1.5" height="4.1" fill="#dd1c1c"/>
<rect x="860.5" y="451.5" width="1" height="4.3" fill="#2683b8"/>
<rect x="860.25" y="452.3" width="1.5" height="2.9" fill="#2a98d6"/>
<rect x="862.8" y="445.6" width="1" height="7.4" fill="#2683b8"/>
<rect x="862.55" y="446.9" width="1.5" height="5.0" fill="#2a98d6"/>
<rect x="865.5" y="439.7" width="1" height="12.7" fill="#b01c1c"/>
<rect x="865.25" y="442.0" width="1.5" height="8.6" fill="#dd1c1c"/>
<rect x="868.5" y="439.0" width="1" height="10.0" fill="#2683b8"/>
<rect x="868.25" y="440.8" width="1.5" height="6.8" fill="#2a98d6"/>
<rect x="870.7" y="437.0" width="1" height="9.5" fill="#2683b8"/>
<rect x="870.45" y="438.7" width="1.5" height="6.5" fill="#2a98d6"/>
<rect x="873.1" y="438.0" width="1" height="11.0" fill="#2683b8"/>
<rect x="872.85" y="440.0" width="1.5" height="7.5" fill="#2a98d6"/>
<rect x="875.7" y="430.5" width="1" height="16.0" fill="#2683b8"/>
<rect x="875.45" y="433.4" width="1.5" height="10.9" fill="#2a98d6"/>
<rect x="879.0" y="422.0" width="1" height="19.4" fill="#b01c1c"/>
<rect x="878.75" y="430.0" width="1.5" height="11.4" fill="#dd1c1c"/>
<rect x="881.3" y="433.0" width="1" height="9.0" fill="#b01c1c"/>
<rect x="881.05" y="434.6" width="1.5" height="6.1" fill="#dd1c1c"/>
<rect x="883.8" y="433.8" width="1" height="9.2" fill="#2683b8"/>
<rect x="883.55" y="435.5" width="1.5" height="6.3" fill="#2a98d6"/>
<rect x="886.9" y="436.4" width="1" height="4.2" fill="#b01c1c"/>
<rect x="886.65" y="437.2" width="1.5" height="2.9" fill="#dd1c1c"/>
<rect x="889.1" y="437.0" width="1" height="3.6" fill="#b01c1c"/>
<rect x="888.85" y="437.6" width="1.5" height="2.4" fill="#dd1c1c"/>
<rect x="891.3" y="437.0" width="1" height="13.0" fill="#b01c1c"/>
<rect x="891.05" y="439.3" width="1.5" height="8.8" fill="#dd1c1c"/>
<rect x="893.7" y="444.0" width="1" height="11.8" fill="#b01c1c"/>
<rect x="893.45" y="446.1" width="1.5" height="8.0" fill="#dd1c1c"/>
<rect x="896.5" y="445.6" width="1" height="11.9" fill="#2683b8"/>
<rect x="896.25" y="447.7" width="1.5" height="8.1" fill="#2a98d6"/>
<rect x="898.9" y="439.0" width="1" height="13.4" fill="#b01c1c"/>
<rect x="898.65" y="441.4" width="1.5" height="9.1" fill="#dd1c1c"/>
<rect x="901.5" y="444.0" width="1" height="4.0" fill="#b01c1c"/>
<rect x="901.25" y="444.7" width="1.5" height="2.7" fill="#dd1c1c"/>
<rect x="903.8" y="443.0" width="1" height="9.4" fill="#b01c1c"/>
<rect x="903.55" y="444.7" width="1.5" height="6.4" fill="#dd1c1c"/>
<rect x="906.5" y="431.0" width="1" height="20.5" fill="#2683b8"/>
<rect x="906.25" y="438.0" width="1.5" height="13.5" fill="#2a98d6"/>
<rect x="909.1" y="439.7" width="1" height="8.3" fill="#b01c1c"/>
<rect x="908.85" y="441.2" width="1.5" height="5.6" fill="#dd1c1c"/>
<rect x="911.3" y="441.4" width="1" height="14.4" fill="#b01c1c"/>
<rect x="911.05" y="444.0" width="1.5" height="9.8" fill="#dd1c1c"/>
<rect x="913.9" y="449.0" width="1" height="6.0" fill="#b01c1c"/>
<rect x="913.65" y="450.1" width="1.5" height="4.1" fill="#dd1c1c"/>
<rect x="916.5" y="451.5" width="1" height="4.3" fill="#b01c1c"/>
<rect x="916.25" y="452.3" width="1.5" height="2.9" fill="#dd1c1c"/>
<rect x="919.5" y="452.4" width="1" height="2.6" fill="#2683b8"/>
<rect x="919.25" y="452.4" width="1.5" height="2.6" fill="#2a98d6"/>
<rect x="922.5" y="452.4" width="1" height="3.4" fill="#2683b8"/>
<rect x="922.25" y="453.0" width="1.5" height="2.3" fill="#2a98d6"/>
<rect x="924.8" y="449.0" width="1" height="4.0" fill="#2683b8"/>
<rect x="924.55" y="449.7" width="1.5" height="2.7" fill="#2a98d6"/>
<rect x="927.1" y="444.0" width="1" height="5.0" fill="#2683b8"/>
<rect x="926.85" y="444.9" width="1.5" height="3.4" fill="#2a98d6"/>
<rect x="929.1" y="436.4" width="1" height="10.6" fill="#2683b8"/>
<rect x="928.85" y="438.3" width="1.5" height="7.2" fill="#2a98d6"/>
<rect x="932.1" y="441.4" width="1" height="5.1" fill="#b01c1c"/>
<rect x="931.85" y="442.3" width="1.5" height="3.5" fill="#dd1c1c"/>
<rect x="934.5" y="444.0" width="1" height="6.0" fill="#b01c1c"/>
<rect x="934.25" y="445.1" width="1.5" height="4.1" fill="#dd1c1c"/>
<rect x="937.2" y="447.0" width="1" height="4.5" fill="#b01c1c"/>
<rect x="936.95" y="447.8" width="1.5" height="3.1" fill="#dd1c1c"/>
<rect x="940.5" y="448.0" width="1" height="3.5" fill="#b01c1c"/>
<rect x="940.25" y="448.6" width="1.5" height="2.4" fill="#dd1c1c"/>
<rect x="942.8" y="445.6" width="1" height="4.4" fill="#2683b8"/>
<rect x="942.55" y="446.4" width="1.5" height="3.0" fill="#2a98d6"/>
<rect x="945.5" y="439.0" width="1" height="8.0" fill="#2683b8"/>
<rect x="945.25" y="440.4" width="1.5" height="5.4" fill="#2a98d6"/>
<rect x="948.1" y="431.0" width="1" height="8.0" fill="#2683b8"/>
<rect x="947.85" y="432.4" width="1.5" height="5.4" fill="#2a98d6"/>
<rect x="950.8" y="421.0" width="1" height="18.0" fill="#2683b8"/>
<rect x="950.55" y="431.0" width="1.5" height="8.0" fill="#2a98d6"/>
<rect x="953.0" y="433.8" width="1" height="15.2" fill="#b01c1c"/>
<rect x="952.75" y="436.5" width="1.5" height="10.3" fill="#dd1c1c"/>
<rect x="955.5" y="444.0" width="1" height="5.0" fill="#2683b8"/>
<rect x="955.25" y="444.9" width="1.5" height="3.4" fill="#2a98d6"/>
<rect x="958.0" y="439.7" width="1" height="6.8" fill="#2683b8"/>
<rect x="957.75" y="440.9" width="1.5" height="4.6" fill="#2a98d6"/>
<rect x="960.5" y="438.0" width="1" height="6.8" fill="#2683b8"/>
<rect x="960.25" y="439.2" width="1.5" height="4.6" fill="#2a98d6"/>
<rect x="963.1" y="434.7" width="1" height="5.9" fill="#2683b8"/>
<rect x="962.85" y="435.8" width="1.5" height="4.0" fill="#2a98d6"/>
<rect x="965.7" y="433.8" width="1" height="11.8" fill="#b01c1c"/>
<rect x="965.45" y="435.9" width="1.5" height="8.0" fill="#dd1c1c"/>
<rect x="968.5" y="444.0" width="1" height="3.0" fill="#2683b8"/>
<rect x="968.25" y="444.5" width="1.5" height="2.0" fill="#2a98d6"/>
<rect x="970.8" y="444.0" width="1" height="5.0" fill="#2683b8"/>
<rect x="970.55" y="444.9" width="1.5" height="3.4" fill="#2a98d6"/>
<rect x="973.5" y="439.7" width="1" height="7.3" fill="#2683b8"/>
<rect x="973.25" y="441.0" width="1.5" height="5.0" fill="#2a98d6"/>
<rect x="976.3" y="439.0" width="1" height="10.0" fill="#b01c1c"/>
<rect x="976.05" y="440.8" width="1.5" height="6.8" fill="#dd1c1c"/>
<rect x="978.7" y="447.0" width="1" height="10.5" fill="#b01c1c"/>
<rect x="978.45" y="448.9" width="1.5" height="7.1" fill="#dd1c1c"/>
<rect x="981.3" y="450.0" width="1" height="5.8" fill="#2683b8"/>
<rect x="981.05" y="451.0" width="1.5" height="3.9" fill="#2a98d6"/>
<rect x="983.8" y="449.0" width="1" height="5.0" fill="#2683b8"/>
<rect x="983.55" y="449.9" width="1.5" height="3.4" fill="#2a98d6"/>
<rect x="986.5" y="437.0" width="1" height="18.8" fill="#b01c1c"/>
<rect x="986.25" y="447.0" width="1.5" height="8.8" fill="#dd1c1c"/>
<rect x="988.9" y="452.4" width="1" height="15.2" fill="#b01c1c"/>
<rect x="988.65" y="455.1" width="1.5" height="10.3" fill="#dd1c1c"/>
<rect x="991.5" y="463.0" width="1" height="7.0" fill="#b01c1c"/>
<rect x="991.25" y="464.3" width="1.5" height="4.8" fill="#dd1c1c"/>
<rect x="994.3" y="466.7" width="1" height="10.1" fill="#b01c1c"/>
<rect x="994.05" y="468.5" width="1.5" height="6.9" fill="#dd1c1c"/>
<rect x="996.8" y="463.0" width="1" height="7.0" fill="#2683b8"/>
<rect x="996.55" y="464.3" width="1.5" height="4.8" fill="#2a98d6"/>
<rect x="999.5" y="463.0" width="1" height="8.0" fill="#b01c1c"/>
<rect x="999.25" y="464.4" width="1.5" height="5.4" fill="#dd1c1c"/>
<rect x="1001.9" y="463.0" width="1" height="8.0" fill="#2683b8"/>
<rect x="1001.65" y="464.4" width="1.5" height="5.4" fill="#2a98d6"/>
<rect x="1004.5" y="462.5" width="1" height="9.3" fill="#b01c1c"/>
<rect x="1004.25" y="464.2" width="1.5" height="6.3" fill="#dd1c1c"/>
<rect x="1006.9" y="466.7" width="1" height="5.9" fill="#2683b8"/>
<rect x="1006.65" y="467.8" width="1.5" height="4.0" fill="#2a98d6"/>
<rect x="1009.5" y="462.5" width="1" height="4.2" fill="#2683b8"/>
<rect x="1009.25" y="463.3" width="1.5" height="2.9" fill="#2a98d6"/>
<rect x="1012.0" y="460.0" width="1" height="4.0" fill="#b01c1c"/>
<rect x="1011.75" y="460.7" width="1.5" height="2.7" fill="#dd1c1c"/>
<rect x="1014.5" y="460.0" width="1" height="11.0" fill="#b01c1c"/>
<rect x="1014.25" y="462.0" width="1.5" height="7.5" fill="#dd1c1c"/>
<rect x="1017.3" y="466.0" width="1" height="7.5" fill="#2683b8"/>
<rect x="1017.05" y="467.4" width="1.5" height="5.1" fill="#2a98d6"/>
<rect x="1019.5" y="443.0" width="1" height="23.7" fill="#2683b8"/>
<rect x="1019.25" y="444.0" width="1.5" height="22.7" fill="#2a98d6"/>
<rect x="1022.1" y="444.8" width="1" height="12.7" fill="#b01c1c"/>
<rect x="1021.85" y="447.1" width="1.5" height="8.6" fill="#dd1c1c"/>
<rect x="1024.7" y="445.6" width="1" height="11.9" fill="#2683b8"/>
<rect x="1024.45" y="447.7" width="1.5" height="8.1" fill="#2a98d6"/>
<rect x="1027.5" y="443.0" width="1" height="9.4" fill="#b01c1c"/>
<rect x="1027.25" y="444.7" width="1.5" height="6.4" fill="#dd1c1c"/>
<rect x="1030.5" y="451.5" width="1" height="3.5" fill="#b01c1c"/>
<rect x="1030.25" y="452.1" width="1.5" height="2.4" fill="#dd1c1c"/>
<rect x="1032.8" y="451.5" width="1" height="4.3" fill="#2683b8"/>
<rect x="1032.55" y="452.3" width="1.5" height="2.9" fill="#2a98d6"/>
<rect x="1035.5" y="451.5" width="1" height="6.5" fill="#b01c1c"/>
<rect x="1035.25" y="452.7" width="1.5" height="4.4" fill="#dd1c1c"/>
<rect x="1037.9" y="450.7" width="1" height="10.3" fill="#2683b8"/>
<rect x="1037.65" y="452.6" width="1.5" height="7.0" fill="#2a98d6"/>
<rect x="1040.5" y="448.0" width="1" height="7.8" fill="#b01c1c"/>
<rect x="1040.25" y="449.4" width="1.5" height="5.3" fill="#dd1c1c"/>
<rect x="1042.8" y="443.0" width="1" height="12.0" fill="#2683b8"/>
<rect x="1042.55" y="445.2" width="1.5" height="8.2" fill="#2a98d6"/>
<rect x="1045.5" y="448.0" width="1" height="6.0" fill="#b01c1c"/>
<rect x="1045.25" y="449.1" width="1.5" height="4.1" fill="#dd1c1c"/>
<rect x="1048.0" y="448.0" width="1" height="4.4" fill="#2683b8"/>
<rect x="1047.75" y="448.8" width="1.5" height="3.0" fill="#2a98d6"/>
<rect x="1050.5" y="442.0" width="1" height="10.4" fill="#2683b8"/>
<rect x="1050.25" y="443.9" width="1.5" height="7.1" fill="#2a98d6"/>
<rect x="1053.8" y="433.8" width="1" height="18.6" fill="#b01c1c"/>
<rect x="1053.55" y="445.6" width="1.5" height="6.8" fill="#dd1c1c"/>
<rect x="1056.1" y="446.5" width="1" height="7.5" fill="#b01c1c"/>
<rect x="1055.85" y="447.9" width="1.5" height="5.1" fill="#dd1c1c"/>
<rect x="1058.5" y="452.4" width="1" height="2.6" fill="#2683b8"/>
<rect x="1058.25" y="452.4" width="1.5" height="2.6" fill="#2a98d6"/>
<rect x="1060.8" y="451.5" width="1" height="3.5" fill="#2683b8"/>
<rect x="1060.55" y="452.1" width="1.5" height="2.4" fill="#2a98d6"/>
<rect x="1063.5" y="449.0" width="1" height="4.0" fill="#2683b8"/>
<rect x="1063.25" y="449.7" width="1.5" height="2.7" fill="#2a98d6"/>
<rect x="1066.3" y="448.0" width="1" height="4.4" fill="#2683b8"/>
<rect x="1066.05" y="448.8" width="1.5" height="3.0" fill="#2a98d6"/>
<rect x="1068.7" y="449.0" width="1" height="6.0" fill="#b01c1c"/>
<rect x="1068.45" y="450.1" width="1.5" height="4.1" fill="#dd1c1c"/>
<rect x="1071.3" y="451.5" width="1" height="3.5" fill="#2683b8"/>
<rect x="1071.05" y="452.1" width="1.5" height="2.4" fill="#2a98d6"/>
<rect x="1073.8" y="449.0" width="1" height="6.0" fill="#2683b8"/>
<rect x="1073.55" y="450.1" width="1.5" height="4.1" fill="#2a98d6"/>
<rect x="1076.5" y="442.0" width="1" height="9.5" fill="#2683b8"/>
<rect x="1076.25" y="443.7" width="1.5" height="6.5" fill="#2a98d6"/>
<rect x="1078.9" y="436.4" width="1" height="11.6" fill="#2683b8"/>
<rect x="1078.65" y="438.5" width="1.5" height="7.9" fill="#2a98d6"/>
<rect x="1081.5" y="437.0" width="1" height="12.0" fill="#b01c1c"/>
<rect x="1081.25" y="439.2" width="1.5" height="8.2" fill="#dd1c1c"/>
<rect x="1084.3" y="418.7" width="1" height="31.3" fill="#2683b8"/>
<rect x="1084.05" y="424.0" width="1.5" height="26.0" fill="#2a98d6"/>
<rect x="1086.8" y="423.7" width="1" height="17.7" fill="#b01c1c"/>
<rect x="1086.55" y="426.9" width="1.5" height="12.0" fill="#dd1c1c"/>
<rect x="1089.5" y="428.0" width="1" height="5.8" fill="#2683b8"/>
<rect x="1089.25" y="429.0" width="1.5" height="3.9" fill="#2a98d6"/>
<rect x="1091.8" y="428.0" width="1" height="9.0" fill="#2683b8"/>
<rect x="1091.55" y="429.6" width="1.5" height="6.1" fill="#2a98d6"/>
<rect x="1094.5" y="427.0" width="1" height="7.7" fill="#b01c1c"/>
<rect x="1094.25" y="428.4" width="1.5" height="5.2" fill="#dd1c1c"/>
<rect x="1097.0" y="429.6" width="1" height="2.4" fill="#2683b8"/>
<rect x="1096.75" y="429.6" width="1.5" height="2.4" fill="#2a98d6"/>
<rect x="1099.5" y="428.0" width="1" height="6.7" fill="#2683b8"/>
<rect x="1099.25" y="429.2" width="1.5" height="4.6" fill="#2a98d6"/>
<rect x="1102.5" y="428.0" width="1" height="4.0" fill="#2683b8"/>
<rect x="1102.25" y="428.7" width="1.5" height="2.7" fill="#2a98d6"/>
<rect x="140.0" y="78.9" width="2.5" height="1" fill="#2a98d6"/>
<rect x="142.5" y="84.0" width="2.5" height="1" fill="#2a98d6"/>
<rect x="145.0" y="86.5" width="2.5" height="1" fill="#2a98d6"/>
<rect x="136.7" y="95.5" width="2.5" height="1" fill="#2a98d6"/>
<rect x="147.7" y="94.1" width="2.5" height="1" fill="#2a98d6"/>
<rect x="132.0" y="146.5" width="2.5" height="1" fill="#2a98d6"/>
<rect x="632" y="551" width="3.5" height="42" fill="#2b8fc4"/>
<rect x="0" y="541" width="1221" height="4" fill="#464646"/>
<rect x="1151" y="33" width="1.1" height="508" fill="#828282"/>
<rect x="1151" y="545" width="1.1" height="48" fill="#828282"/>
<rect x="1221" y="0" width="1" height="593" fill="#111"/>
<text x="1162" y="70.2" class="ax">49.00</text>
<text x="1162" y="144.2" class="ax">48.50</text>
<text x="1162" y="219.2" class="ax">48.00</text>
<text x="1162" y="293.2" class="ax">47.50</text>
<text x="1162" y="368.2" class="ax">47.00</text>
<text x="1162" y="442.2" class="ax">46.50</text>
<text x="1162" y="517.2" class="ax">46.00</text>
<text x="1162" y="568.5" class="ax">2000000</text>
<text x="1162" y="433" font-size="11.5" fill="#2b8fd0" font-family="Liberation Sans, sans-serif">46.55</text>
<rect x="1165" y="179" width="34" height="22" rx="2.5" fill="#bfbfbf"/>
<text x="1167.8" y="194.5" font-size="11.5" fill="#111" font-family="Liberation Sans, sans-serif">48.16</text>
<circle cx="135.7" cy="109.4" r="3.6" fill="#3a3a3a" stroke="#8c8c8c" stroke-width="1.8"/>
</svg>
<div id="tip">
<div style="top:5px">Откр.<b>48.70</b></div>
<div style="top:21px">Макс.<b>48.70</b></div>
<div style="top:37px">Мин.<b>48.70</b></div>
<div style="top:53px">Закр.<b>48.70</b></div>
<div style="top:75px;color:#7a7a7a">Объемы<b style="left:61px;color:#7a7a7a">100</b></div>
</div>
<div id="tool"><div class="sel"></div>
<svg width="21" height="229" viewBox="0 0 21 229" style="left:0;top:0">
<g stroke="#3c3c3c" stroke-width="1"><line x1="0" y1="6.5" x2="10" y2="6.5"/><line x1="0" y1="9.5" x2="10" y2="9.5"/><line x1="0" y1="12.5" x2="10" y2="12.5"/></g>
<path d="M-2 28 L9 34 L5 36 L9 41 L7 42.5 L3 37.5 L0 41 Z" fill="#fff"/>
<circle cx="2" cy="63" r="4.2" fill="none" stroke="#fff" stroke-width="2"/><line x1="5" y1="66" x2="10" y2="71" stroke="#fff" stroke-width="2.4" stroke-linecap="round"/>
<path d="M0 90 L0 101 L6 103 L9 97 L9 91 L7.5 91 L7.5 95 L6.5 95 L6.5 89 L5 89 L5 94.5 L4 94.5 L4 88.5 L2.5 88.5 L2.5 94.5 L1.5 94.5 L1.5 90 Z" fill="#fff"/>
<line x1="-1" y1="118" x2="9" y2="130" stroke="#fff" stroke-width="1.3"/><circle cx="9" cy="130.5" r="1.5" fill="#fff"/>
<path d="M-1 161 L9 150 M3.5 149.5 L9.5 149.5 L9.5 155.5" stroke="#fff" stroke-width="2" fill="none"/>
<line x1="0" y1="185" x2="11" y2="185" stroke="#9a9a9a" stroke-width="1.4"/>
<rect x="-1" y="209" width="11" height="12" fill="none" stroke="#fff" stroke-width="1.1"/><circle cx="10" cy="209" r="1" fill="#fff"/><circle cx="10" cy="221" r="1" fill="#fff"/>
</svg></div>
<div id="hdr"><div class="tb"></div>
<span style="left:1.6px;letter-spacing:-0.5px">TEVA</span><i class="dd" style="left:131px"></i>
<span style="left:151px">1 минута</span><i class="dd" style="left:221px"></i>
<span style="left:241px">Свечи</span><i class="dd" style="left:301px"></i>
<span style="left:322px">+ Добавить индикатор</span><i class="dd" style="left:457px"></i>
<span class="title" style="left:783px">График</span>
<svg width="70" height="33" viewBox="0 0 70 33" style="left:1152px;top:0">
<path d="M8.7 13.4 L5.2 17 L8.7 20.6" stroke="#e6e6e6" stroke-width="1.6" fill="none"/>
<rect x="26" y="18.5" width="8" height="2" fill="#e6e6e6"/>
<path d="M50 13.5 L57 20.5 M57 13.5 L50 20.5" stroke="#e6e6e6" stroke-width="1.6" fill="none"/>
</svg>
</div>
</body></html>
